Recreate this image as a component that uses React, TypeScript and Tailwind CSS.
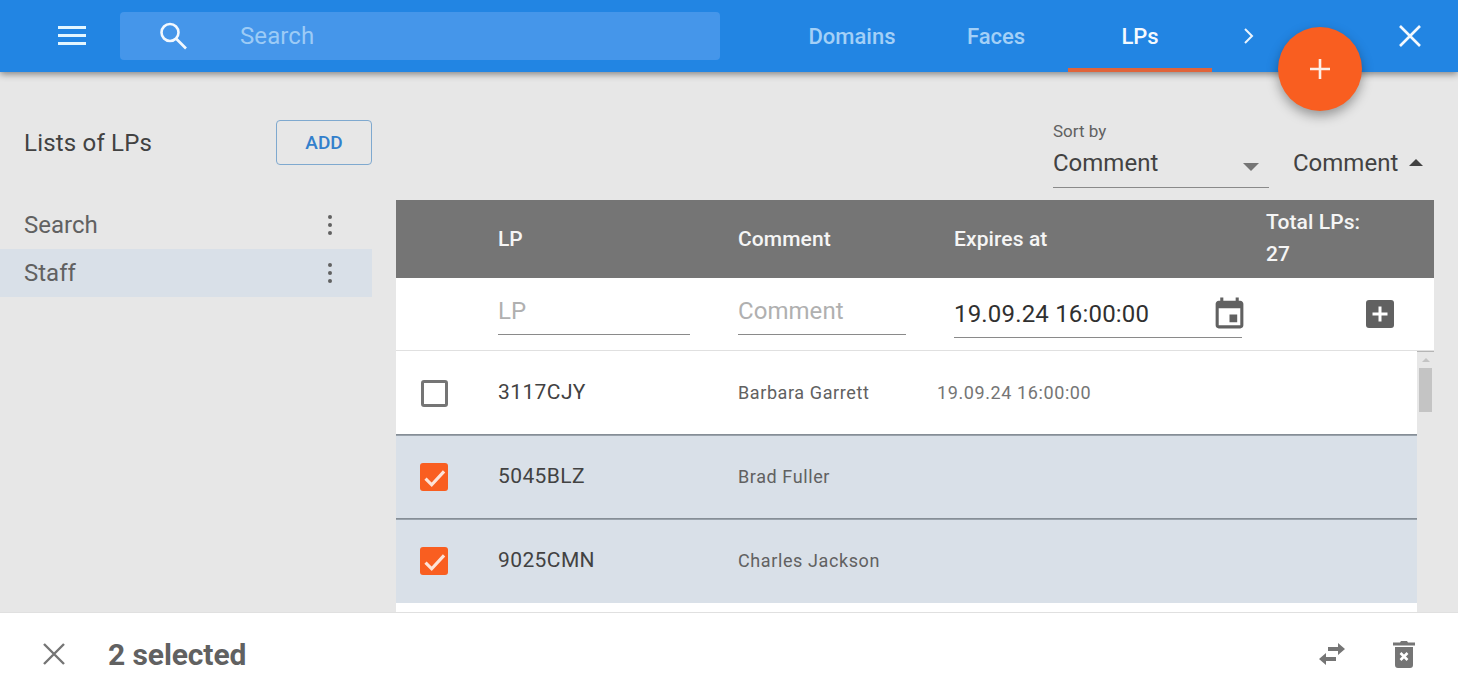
const rows = [
  { lp: '3117CJY', comment: 'Barbara Garrett', expires: '19.09.24 16:00:00', selected: false, line: 'shadow-[inset_0_-1px_0_#868e96]' },
  { lp: '5045BLZ', comment: 'Brad Fuller', expires: '', selected: true, line: 'shadow-[inset_0_1px_0_#99a2ab,inset_0_-1px_0_#868e96]' },
  { lp: '9025CMN', comment: 'Charles Jackson', expires: '', selected: true, line: 'shadow-[inset_0_1px_0_#99a2ab]' },
];

function Dots() {
  return (
    <svg width="4" height="20" viewBox="0 0 4 20" className="text-[#616161]" fill="currentColor">
      <circle cx="2" cy="2" r="2" />
      <circle cx="2" cy="10" r="2" />
      <circle cx="2" cy="18" r="2" />
    </svg>
  );
}

function Checkbox({ checked }: { checked: boolean }) {
  if (!checked) {
    return <div className="ml-[1px] w-[27px] h-[27px] rounded-[3px] border-[3px] border-[#757575]" />;
  }
  return (
    <div className="w-[28px] h-[28px] rounded-[3px] bg-[#f95e20] flex items-center justify-center">
      <svg width="27" height="27" viewBox="0 0 24 24" fill="none" stroke="#fde3d8" strokeWidth="2.8">
        <path d="M4 13l5.500 5.500L20.500 6.500" />
      </svg>
    </div>
  );
}

export default function App() {
  return (
    <div className="relative w-[1458px] h-[695px] overflow-hidden flex flex-col bg-[#e7e7e7] text-[#424242] font-['Roboto',sans-serif]">
      {/* Top bar */}
      <header className="relative z-10 h-[72px] shrink-0 bg-[#2285e3] flex items-center shadow-[0_2px_7px_rgba(0,0,0,0.45)]">
        <svg width="28" height="20" viewBox="0 0 28 20" className="ml-[58px]" fill="#e3f6ff">
          <rect x="0" y="0" width="28" height="3" />
          <rect x="0" y="8" width="28" height="3" />
          <rect x="0" y="16" width="28" height="3" />
        </svg>
        <div className="ml-[34px] w-[600px] h-12 rounded bg-[#4596ea] flex items-center">
          <svg width="30" height="30" viewBox="0 0 30 30" className="ml-[38px] mr-[52px]" fill="none" stroke="#f2f8fe" strokeWidth="2.6">
            <circle cx="12" cy="11.500" r="8.500" />
            <path d="M18 17.500l10 10" />
          </svg>
          <span className="text-2xl tracking-[0.1px] text-[#9ccbf6]">Search</span>
        </div>
        <nav className="ml-[60px] flex items-center h-full text-[22px] font-medium text-[#a3d0f7]">
          <span className="w-[144px] flex justify-center">Domains</span>
          <span className="w-[144px] flex justify-center">Faces</span>
          <span className="w-[144px] h-full pt-[4px] flex items-center justify-center text-[#f4f9fe] border-b-4 border-[#e0643a]">LPs</span>
        </nav>
        <svg width="12" height="16" viewBox="0 0 12 16" className="ml-[31px]" fill="none" stroke="#eaf4fd" strokeWidth="2">
          <path d="M2 1l7 7-7 7" />
        </svg>
        <svg width="22" height="22" viewBox="0 0 22 22" className="ml-[144px]" fill="none" stroke="#f4f9fe" strokeWidth="2.6">
          <path d="M1 1l20 20M21 1L1 21" />
        </svg>
      </header>

      {/* Add button */}
      <button className="absolute z-20 left-[1278px] top-[27px] w-[84px] h-[84px] rounded-full bg-[#f95e20] flex items-center justify-center shadow-[0_5px_12px_rgba(0,0,0,0.35)]">
        <svg width="22" height="22" viewBox="0 0 22 22" fill="none" stroke="#fdeee6" strokeWidth="2.6">
          <path d="M11 1v20M1 11h20" />
        </svg>
      </button>

      <div className="flex flex-1 min-h-0">
        {/* Lists */}
        <aside className="w-[372px] shrink-0">
          <div className="mt-[48px] h-[45px] flex items-center justify-between pl-6">
            <span className="text-2xl tracking-[0.2px]">Lists of LPs</span>
            <button className="w-24 h-[45px] pt-[2px] rounded border border-[#7fa9cf] text-[#3380cc] text-[19px] font-medium">ADD</button>
          </div>
          <div className="mt-[36px] h-12 pl-6 pr-[40px] flex items-center justify-between text-2xl text-[#616161]">
            <span>Search</span>
            <Dots />
          </div>
          <div className="h-12 pl-6 pr-[40px] flex items-center justify-between text-2xl text-[#616161] bg-[#d9e0e8]">
            <span>Staff</span>
            <Dots />
          </div>
        </aside>

        {/* Table */}
        <main className="ml-6 w-[1038px] flex flex-col">
          <div className="h-[128px] shrink-0 relative">
            <div className="absolute left-[657px] top-[49px] w-[216px] h-[67px] border-b border-[#8a8a8a]">
              <div className="text-[17px] leading-5 text-[#616161]">Sort by</div>
              <div className="mt-[6px] flex items-center justify-between pr-[10px] text-2xl leading-8">
                <span>Comment</span>
                <span className="mt-[7px] border-x-[8px] border-x-transparent border-t-[8px] border-t-[#757575]" />
              </div>
            </div>
            <div className="absolute left-[897px] top-[75px] flex items-center text-2xl leading-8">
              <span>Comment</span>
              <span className="ml-[11px] -mt-[1px] border-x-[7.500px] border-x-transparent border-b-[7.500px] border-b-[#424242]" />
            </div>
          </div>

          <div className="h-[78px] shrink-0 bg-[#757575] flex items-center text-[#f5f5f5] text-[21px] font-medium">
            <span className="ml-[102px] w-[240px] pt-[2px]">LP</span>
            <span className="w-[216px] pt-[2px] tracking-[0.1px]">Comment</span>
            <span className="w-[312px] pt-[2px] tracking-[0.1px]">Expires at</span>
            <span className="leading-[32px] tracking-[0.1px] pb-[2px]">Total LPs:<br />27</span>
          </div>

          <div className="h-[73px] shrink-0 bg-white border-b border-[#e0e0e0] flex items-center text-2xl">
            <div className="ml-[102px] mb-[3px] w-[192px] h-[45px] border-b border-[#8a8a8a] text-[#b0b0b0] pt-[5px] leading-8">LP</div>
            <div className="ml-[48px] mb-[3px] w-[168px] h-[45px] border-b border-[#8a8a8a] text-[#b0b0b0] pt-[5px] leading-8 tracking-[0.05px]">Comment</div>
            <div className="ml-[48px] my-[2px] w-[288px] h-[48px] border-b border-[#8a8a8a] flex items-center justify-between text-[#303030] tracking-[0.18px]">
              <span>19.09.24 16:00:00</span>
              <svg width="37" height="37" viewBox="0 0 24 24" className="-mr-[6px] mt-[1px]" fill="#616161">
                <path d="M17 12h-5v5h5v-5zM16 1v2H8V1H6v2H5c-1.110 0-1.990.9-1.990 2L3 19c0 1.100.89 2 2 2h14c1.100 0 2-.9 2-2V5c0-1.100-.9-2-2-2h-1V1h-2zm3 18H5V8h14v11z" />
              </svg>
            </div>
            <svg width="28" height="28" viewBox="0 0 28 28" className="ml-[124px]">
              <rect width="28" height="28" rx="3" fill="#616161" />
              <path d="M14 6.500v15M6.500 14h15" stroke="#fff" strokeWidth="3" />
            </svg>
          </div>

          <div className="flex-1 min-h-0 flex">
            <div className="w-[1021px] bg-white">
              {rows.map((row) => (
                <div
                  key={row.lp}
                  className={`h-[84px] flex items-center ${row.line} ${row.selected ? 'bg-[#d9e0e8]' : ''}`}
                >
                  <div className="ml-[24px] w-[78px]">
                    <Checkbox checked={row.selected} />
                  </div>
                  <span className="w-[240px] text-[21px] tracking-[0.4px] text-[#424242]">{row.lp}</span>
                  <span className="w-[199px] text-lg tracking-[0.6px] text-[#616161]">{row.comment}</span>
                  <span className="text-lg tracking-[0.6px] text-[#757575]">{row.expires}</span>
                </div>
              ))}
            </div>
            <div className="w-[17px] bg-[#e7e7e7] border-t border-[#b5b5b5] flex flex-col items-center pt-[6px]">
              <span className="border-x-[4px] border-x-transparent border-b-[4px] border-b-[#c4c4c4]" />
              <div className="mt-[6px] w-[13px] h-[44px] bg-[#c4c4c4]" />
            </div>
          </div>
        </main>
      </div>

      {/* Selection bar */}
      <footer className="h-[83px] shrink-0 bg-white border-t border-[#e0e0e0] flex items-center">
        <svg width="22" height="22" viewBox="0 0 22 22" className="ml-[43px]" fill="none" stroke="#757575" strokeWidth="2.4">
          <path d="M1 1l20 20M21 1L1 21" />
        </svg>
        <span className="ml-[43px] text-[30px] font-bold tracking-[-0.1px] text-[#616161]">2 selected</span>
        <svg width="28" height="22" viewBox="0 0 28 22" className="ml-auto" fill="#757575">
          <path d="M10 4h10V0l7 6-7 6V8H10zM18 14H8v-4l-7 6 7 6v-4h10z" />
        </svg>
        <svg width="22" height="28" viewBox="0 0 22 28" className="ml-[47px] mr-[43px]" fill="#757575">
          <path d="M0 2.500h7L8 1h6l1 1.500h7v3H0zM2 7h18v18a3 3 0 0 1-3 3H5a3 3 0 0 1-3-3z" />
          <path d="M7.500 13l7 7M14.500 13l-7 7" stroke="#fff" strokeWidth="2.600" />
        </svg>
      </footer>
    </div>
  );
}
